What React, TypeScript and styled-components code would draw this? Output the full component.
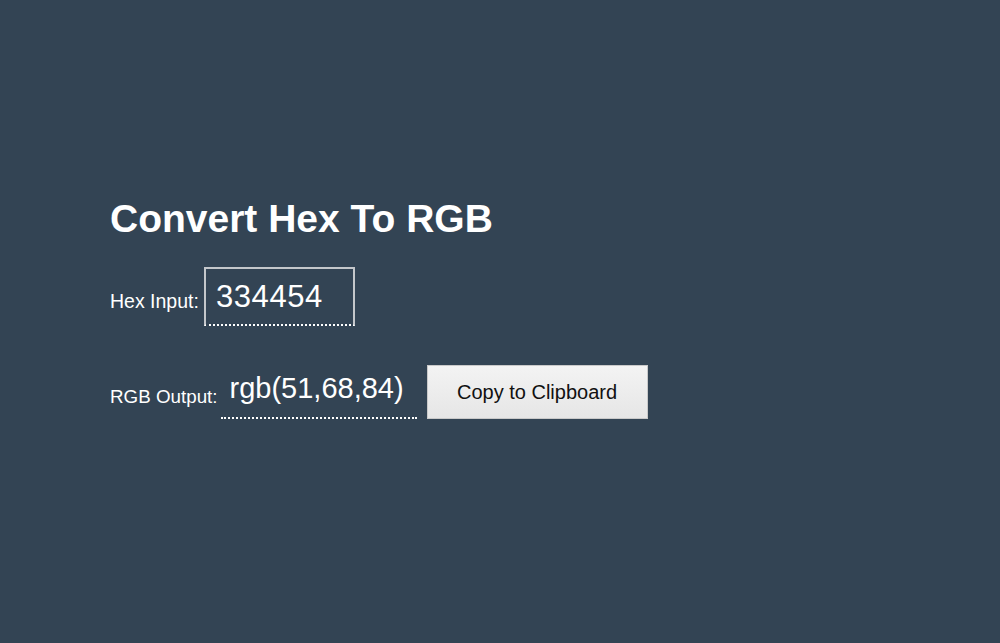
import React from "react";
import styled, { createGlobalStyle } from "styled-components";

const Global = createGlobalStyle`
  html, body {
    margin: 0;
    padding: 0;
    background: #334454;
  }
  body {
    font-family: "Liberation Sans", Arial, Helvetica, sans-serif;
  }
`;

const Page = styled.main`
  box-sizing: border-box;
  width: 1000px;
  height: 643px;
  background: #334454;
  padding: 197px 0 0 110px;
  display: flex;
  flex-direction: column;
  color: #ffffff;
`;

const Title = styled.h1`
  margin: 0;
  font-size: 39px;
  line-height: 44px;
  font-weight: 700;
  color: #ffffff;
`;

const Row = styled.div<{ $top: number }>`
  display: flex;
  align-items: flex-end;
  margin-top: ${(p) => p.$top}px;
`;

const Label = styled.label<{ $bottom: number; $gap: number; $size: number }>`
  font-size: ${(p) => p.$size}px;
  line-height: 22px;
  color: #ffffff;
  margin-bottom: ${(p) => p.$bottom}px;
  margin-right: ${(p) => p.$gap}px;
`;

const HexInput = styled.input`
  box-sizing: border-box;
  width: 151px;
  height: 59px;
  padding: 0 10px;
  margin: 0;
  background: transparent;
  color: #ffffff;
  font-family: "Liberation Sans", Arial, sans-serif;
  font-size: 31px;
  letter-spacing: 0.6px;
  border-top: 2px solid #c4c7cb;
  border-left: 2px solid #c4c7cb;
  border-right: 2px solid #c4c7cb;
  border-bottom: 2px dotted #ffffff;
  outline: none;
`;

const Output = styled.div`
  box-sizing: border-box;
  width: 196px;
  height: 54px;
  padding: 0 0 13px 9px;
  display: flex;
  align-items: flex-end;
  font-size: 29px;
  line-height: 32px;
  color: #ffffff;
  border-bottom: 2px dotted #ffffff;
  margin-right: 10px;
`;

const CopyButton = styled.button`
  box-sizing: border-box;
  width: 221px;
  height: 54px;
  margin: 0;
  padding: 0;
  font-family: "Liberation Sans", Arial, sans-serif;
  font-size: 20px;
  color: #111111;
  background: linear-gradient(#f3f3f3, #e6e6e6);
  border: 1px solid #c9c9c9;
  border-radius: 0;
  cursor: pointer;
`;

export default function App() {
  return (
    <>
      <Global />
      <Page>
        <Title>Convert Hex To RGB</Title>
        <Row $top={26}>
          <Label $bottom={14} $gap={5} $size={19.5} htmlFor="hex">
            Hex Input:
          </Label>
          <HexInput id="hex" defaultValue="334454" />
        </Row>
        <Row $top={39}>
          <Label $bottom={11} $gap={3} $size={18.8}>
            RGB Output:
          </Label>
          <Output>rgb(51,68,84)</Output>
          <CopyButton>Copy to Clipboard</CopyButton>
        </Row>
      </Page>
    </>
  );
}
